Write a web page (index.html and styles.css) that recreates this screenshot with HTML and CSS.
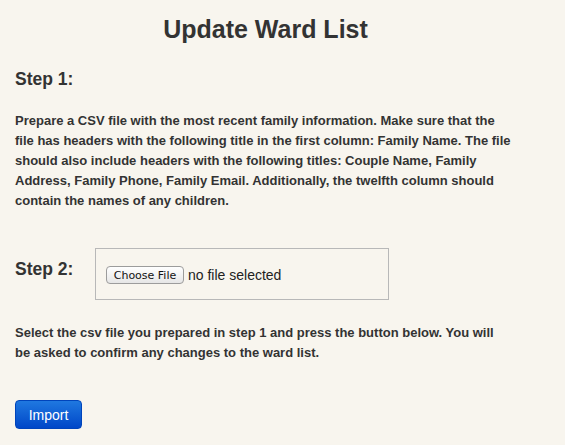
FILE: index.html
```html
<!DOCTYPE html>
<html>
<head>
<meta charset="utf-8">
<link rel="stylesheet" href="styles.css">
</head>
<body>
<div class="page">
  <h1 class="title">Update Ward List</h1>
  <h2 class="step">Step 1:</h2>
  <p class="text">Prepare a CSV file with the most recent family information. Make sure that the<br>file has headers with the following title in the first column: Family Name. The file<br>should also include headers with the following titles: Couple Name, Family<br>Address, Family Phone, Family Email. Additionally, the twelfth column should<br>contain the names of any children.</p>
  <div class="step-row">
    <h2 class="step step-inline">Step 2:</h2>
    <div class="file-box">
      <button class="choose" type="button">Choose File</button>
      <span class="no-file">no file selected</span>
    </div>
  </div>
  <p class="text text-after">Select the csv file you prepared in step 1 and press the button below. You will<br>be asked to confirm any changes to the ward list.</p>
  <button class="import" type="button">Import</button>
</div>
</body>
</html>
```
FILE: styles.css
```css
html, body {
  margin: 0;
  padding: 0;
  background: #f8f5ee;
}
body {
  font-family: "Liberation Sans", Arial, Helvetica, sans-serif;
  color: #333;
}
.page {
  padding: 13px 15px 0 15px;
  width: 535px;
}
.title {
  margin: 0;
  font-size: 25px;
  line-height: 32px;
  font-weight: bold;
  text-align: center;
  width: 501px;
}
.step {
  margin: 23px 0 0 0;
  font-size: 17.5px;
  line-height: 22px;
  font-weight: bold;
}
.text {
  margin: 21px 0 0 0;
  font-size: 13px;
  line-height: 20px;
  font-weight: bold;
  white-space: nowrap;
}
.text-after {
  margin-top: 23px;
}
.step-row {
  display: flex;
  align-items: flex-start;
  margin-top: 37px;
}
.step-inline {
  margin: 10px 0 0 0;
  width: 80px;
}
.file-box {
  box-sizing: border-box;
  width: 294px;
  height: 52px;
  border: 1px solid #b8b8b8;
  padding: 17px 10px 0 10px;
  display: flex;
  align-items: flex-start;
  gap: 4px;
}
.choose {
  box-sizing: border-box;
  height: 18px;
  width: 78px;
  padding: 0;
  font-family: "DejaVu Sans", sans-serif;
  font-size: 11px;
  color: #111;
  background: linear-gradient(#ffffff, #e6e6e6);
  border: 1px solid #9c9c9c;
  border-radius: 4px;
}
.no-file {
  font-size: 14px;
  line-height: 18px;
  color: #222;
}
.import {
  display: block;
  margin-top: 37px;
  box-sizing: border-box;
  width: 67px;
  height: 29px;
  padding: 0;
  font-family: "Liberation Sans", Arial, sans-serif;
  font-size: 14px;
  color: #fff;
  background: linear-gradient(#1f78e0, #0047c8);
  border: 1px solid #0044bb;
  border-radius: 4px;
}
```
